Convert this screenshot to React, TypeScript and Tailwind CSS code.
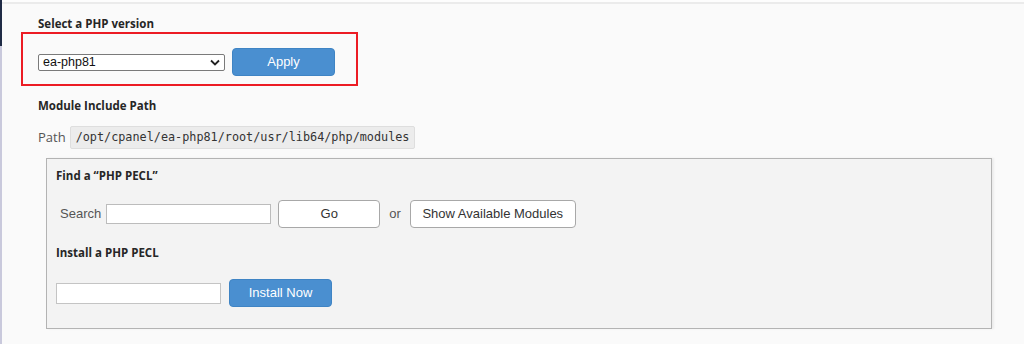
import React from 'react'

const Heading: React.FC<{ children: React.ReactNode; className?: string }> = ({ children, className }) => (
  <div className={`font-['Open_Sans',sans-serif] text-[11.5px] leading-4 font-bold text-[#262626] ${className ?? ''}`}>
    {children}
  </div>
)

const App: React.FC = () => {
  return (
    <div className="flex w-[1024px] h-[344px] bg-[#fafafa] overflow-hidden font-['Liberation_Sans',Arial,sans-serif]">
      {/* left edge of the frame */}
      <div className="flex flex-col w-[2px] shrink-0">
        <div className="h-[46px] bg-[#1f2b45]"></div>
        <div className="flex-1 bg-[#c9c9dc]"></div>
      </div>

      <div className="flex-1 flex flex-col">
        <div className="h-[2px] bg-[#fdfdfd]"></div>
        <div className="h-[2px] bg-[#ebebeb]"></div>

        <div className="pl-[36px] pt-[12px] flex flex-col items-start">
          <Heading>Select a PHP version</Heading>

          {/* highlighted version picker */}
          <div className="-ml-[17px] w-[337px] border-2 border-[#ec1c24] pl-[15px] pt-[14px] pb-[8px] flex items-center gap-[7px]">
            <div className="w-[187px] h-[17px] bg-white border border-[#7a7a7a] rounded-[2px] flex items-center justify-between pl-[4px] pr-[4px]">
              <span className="text-[12.5px] leading-none text-[#111]">ea-php81</span>
              <svg width="10" height="7" viewBox="0 0 10 7" fill="none">
                <path d="M1 1.5 L5 5.5 L9 1.5" stroke="#222" strokeWidth="1.8" />
              </svg>
            </div>
            <button className="w-[103px] h-[28px] rounded-[4px] bg-[#4a8fd0] border border-[#3f84c4] text-white text-[13px]">
              Apply
            </button>
          </div>

          <Heading className="mt-[12px]">Module Include Path</Heading>

          <div className="mt-[12px] flex items-center gap-[4px]">
            <span className="font-['Open_Sans',sans-serif] text-[13px] text-[#555]">Path</span>
            <code className="h-[23px] flex items-center px-[5px] bg-[#ececec] border border-[#dedede] rounded-[2px] font-['DejaVu_Sans_Mono',monospace] text-[11.8px] text-[#333]">
              /opt/cpanel/ea-php81/root/usr/lib64/php/modules
            </code>
          </div>

          {/* PECL panel */}
          <div className="mt-[9px] ml-[8px] w-[946px] h-[171px] bg-[#f3f3f3] border border-[#b3b3b3] shadow-[2px_0_2px_rgba(0,0,0,0.06)] pl-[9px] pt-[9px] flex flex-col items-start">
            <Heading>Find a “PHP PECL”</Heading>

            <div className="mt-[16px] flex items-center h-[28px]">
              <span className="ml-[4px] text-[13px] text-[#555]">Search</span>
              <div className="ml-[5px] w-[165px] h-[20px] bg-white border border-[#bcbcbc]"></div>
              <button className="ml-[7px] w-[102px] h-[28px] bg-white border border-[#a8a8a8] rounded-[4px] text-[13px] text-[#333]">
                Go
              </button>
              <span className="ml-[9px] text-[13px] text-[#555]">or</span>
              <button className="ml-[9px] w-[166px] h-[28px] bg-white border border-[#a8a8a8] rounded-[4px] text-[13px] text-[#333]">
                Show Available Modules
              </button>
            </div>

            <Heading className="mt-[17px]">Install a PHP PECL</Heading>

            <div className="mt-[18px] flex items-center gap-[8px] h-[28px]">
              <div className="w-[165px] h-[21px] bg-white border border-[#c4c4c4]"></div>
              <button className="w-[103px] h-[28px] rounded-[4px] bg-[#4a8fd0] border border-[#3f84c4] text-white text-[13px]">
                Install Now
              </button>
            </div>
          </div>
        </div>
      </div>
    </div>
  )
}

export default App
